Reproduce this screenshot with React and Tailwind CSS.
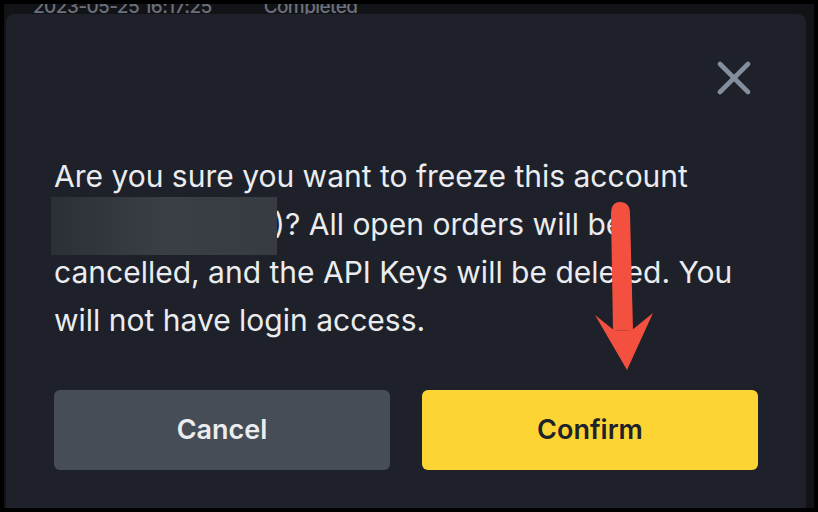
import { X } from 'lucide-react'

function Arrow() {
  return (
    <svg className="absolute left-0 top-0 pointer-events-none" width="818" height="512" viewBox="0 0 818 512">
      <path d="M611 214 Q611 202 620 202 Q630 202 630 214 L633 330 L613 331 Z" fill="#f4503f" />
      <path d="M595 315 L615 331 L632 330 L653 313 L627 370 Z" fill="#f4503f" />
    </svg>
  )
}

export default function App() {
  return (
    <div className="relative w-[818px] h-[512px] bg-black p-1 overflow-hidden" style={{ fontFamily: 'Inter, "Noto Sans", sans-serif' }}>
      <div className="w-full h-full bg-[#121316] overflow-hidden flex flex-col">
        <div className="flex h-[10px] items-end text-[#6b717c] text-[19px] font-medium leading-none tracking-[-0.6px]">
          <span className="ml-[29px] -mb-[2px]">2023-05-25 16:17:25</span>
          <span className="ml-[52px] -mb-[2px]">Completed</span>
        </div>
        <div className="ml-[2px] w-[800px] flex-1 bg-[#1e2129] rounded-t-lg px-12 pt-[36px]">
          <div className="flex justify-end -mr-[4px]">
            <X size={56} strokeWidth={2} className="text-[#848e9c]" />
          </div>
          <p className="mt-[46px] text-[30px] leading-[48px] text-[#eaecef]">
            Are you sure you want to freeze this account{' '}
            <span className="relative inline-block align-top w-[223px] h-[48px] -ml-[3px]">
              <span className="absolute left-0 top-[-3px] w-[226px] h-[58px] bg-gradient-to-r from-[#2b2f36] via-[#3a3e45] to-[#383c42]" />
            </span>
            )? All open orders will be cancelled, and the API Keys will be deleted. You will not have login access.
          </p>
          <div className="mt-[46px] grid grid-cols-2 gap-8">
            <button className="h-[80px] rounded-md bg-[#474d57] text-[#eaecef] text-[27px] font-semibold">Cancel</button>
            <button className="h-[80px] rounded-md bg-[#fcd535] text-[#1e2329] text-[27px] font-semibold">Confirm</button>
          </div>
        </div>
      </div>
      <Arrow />
    </div>
  )
}
